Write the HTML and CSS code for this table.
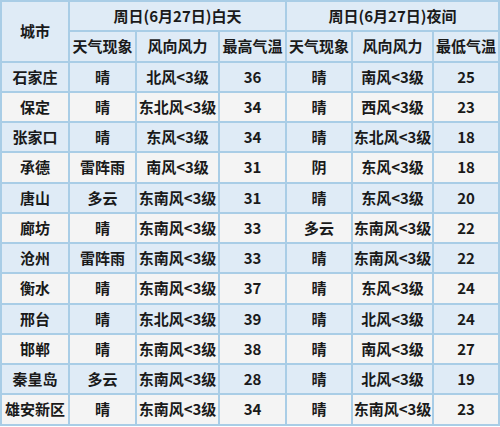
FILE: index.html
```html
<!DOCTYPE html>
<html lang="zh">
<head>
<meta charset="utf-8">
<link rel="stylesheet" href="styles.css">
</head>
<body>
<table class="wx">
<colgroup>
<col class="c1"><col class="c2"><col class="c3"><col class="c4"><col class="c5"><col class="c6"><col class="c7">
</colgroup>
<thead>
<tr class="h1"><th rowspan="2">城市</th><th colspan="3">周日(6月27日)白天</th><th colspan="3">周日(6月27日)夜间</th></tr>
<tr class="h2"><th>天气现象</th><th>风向风力</th><th>最高气温</th><th>天气现象</th><th>风向风力</th><th>最低气温</th></tr>
</thead>
<tbody>
<tr class="b"><td>石家庄</td><td>晴</td><td>北风&lt;3级</td><td>36</td><td>晴</td><td>南风&lt;3级</td><td>25</td></tr>
<tr class="g"><td>保定</td><td>晴</td><td>东北风&lt;3级</td><td>34</td><td>晴</td><td>西风&lt;3级</td><td>23</td></tr>
<tr class="b"><td>张家口</td><td>晴</td><td>东风&lt;3级</td><td>34</td><td>晴</td><td>东北风&lt;3级</td><td>18</td></tr>
<tr class="g"><td>承德</td><td>雷阵雨</td><td>南风&lt;3级</td><td>31</td><td>阴</td><td>东风&lt;3级</td><td>18</td></tr>
<tr class="b"><td>唐山</td><td>多云</td><td>东南风&lt;3级</td><td>31</td><td>晴</td><td>东风&lt;3级</td><td>20</td></tr>
<tr class="g"><td>廊坊</td><td>晴</td><td>东南风&lt;3级</td><td>33</td><td>多云</td><td>东南风&lt;3级</td><td>22</td></tr>
<tr class="b"><td>沧州</td><td>雷阵雨</td><td>东南风&lt;3级</td><td>33</td><td>晴</td><td>东南风&lt;3级</td><td>22</td></tr>
<tr class="g"><td>衡水</td><td>晴</td><td>东南风&lt;3级</td><td>37</td><td>晴</td><td>东风&lt;3级</td><td>24</td></tr>
<tr class="b"><td>邢台</td><td>晴</td><td>东北风&lt;3级</td><td>39</td><td>晴</td><td>北风&lt;3级</td><td>24</td></tr>
<tr class="g"><td>邯郸</td><td>晴</td><td>东南风&lt;3级</td><td>38</td><td>晴</td><td>南风&lt;3级</td><td>27</td></tr>
<tr class="b"><td>秦皇岛</td><td>多云</td><td>东南风&lt;3级</td><td>28</td><td>晴</td><td>北风&lt;3级</td><td>19</td></tr>
<tr class="g"><td>雄安新区</td><td>晴</td><td>东南风&lt;3级</td><td>34</td><td>晴</td><td>东南风&lt;3级</td><td>23</td></tr>
</tbody>
</table>
</body>
</html>
```
FILE: styles.css
```css
html, body {
  margin: 0;
  padding: 0;
  background: #ffffff;
}
.wx {
  border-collapse: collapse;
  table-layout: fixed;
  width: 499px;
  font-family: "Noto Sans CJK SC", "Noto Sans", sans-serif;
  font-weight: bold;
  font-size: 15px;
  color: #1a1a1a;
}
.c1 { width: 68px; }
.c2 { width: 67px; }
.c3 { width: 83px; }
.c4 { width: 67px; }
.c5 { width: 66px; }
.c6 { width: 81px; }
.c7 { width: 66px; }
.wx th, .wx td {
  border: 2px solid #a9cde6;
  text-align: center;
  padding: 0;
  height: 28.25px;
  line-height: 20px;
  white-space: nowrap;
  overflow: hidden;
}
.wx th {
  background: #dfebf6;
}
.wx tr.b td {
  background: #dfebf6;
}
.wx tr.g td {
  background: #f4f4f4;
}
```
